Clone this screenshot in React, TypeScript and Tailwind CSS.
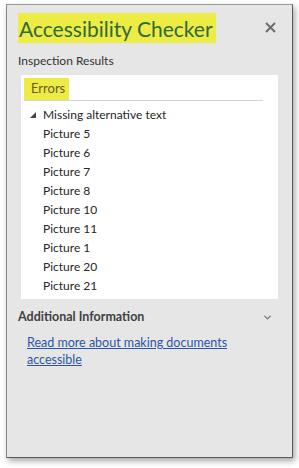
import { ChevronDown } from 'lucide-react';

const pictures = ['Picture 5', 'Picture 6', 'Picture 7', 'Picture 8', 'Picture 10', 'Picture 11', 'Picture 1', 'Picture 20', 'Picture 21'];

export default function App() {
  return (
    <div className="w-[299px] h-[468px] bg-white pt-[4px] pl-[6px]" style={{ fontFamily: 'Lato, "Noto Sans", sans-serif' }}>
      <div className="w-[287px] h-[454px] bg-[#e6e6e6] border border-[#5a5a5a] border-t-[#9a9a9a] border-l-[#8a8a8a] shadow-[2px_3px_6px_rgba(0,0,0,0.35)] flex flex-col pl-[11px] pr-[13px]">
        <div className="flex items-start justify-between mt-[8px]">
          <div className="bg-[#ecec44] h-[30px] w-[198px] flex items-center pl-[1px]">
            <span className="text-[21px] leading-none text-[#2f6a3b] whitespace-nowrap">Accessibility Checker</span>
          </div>
          <svg width="11" height="11" viewBox="0 0 11 11" className="mt-[9px] mr-[3px]">
            <path d="M1 1L10 10M10 1L1 10" stroke="#6b6b6b" strokeWidth="2" />
          </svg>
        </div>
        <div className="mt-[10px] text-[12px] leading-[16px] text-[#333]">Inspection Results</div>
        <div className="mt-[6px] ml-[3px] mr-[1px] bg-white h-[224px] flex flex-col pl-[3px] pr-[15px]">
          <div className="mt-[3px] border-b border-[#d6d6d6] h-[23px]">
            <div className="bg-[#ecec44] w-[45px] h-[22px] flex items-center pl-[7px]">
              <span className="text-[13px] text-[#6b5a1f]">Errors</span>
            </div>
          </div>
          <div className="mt-[4px] flex flex-col text-[12px] text-[#262626]">
            <div className="h-[19px] flex items-center">
              <svg width="6" height="6" viewBox="0 0 6 6" className="ml-[6px] mr-[7px]">
                <path d="M6 0L6 6L0 6Z" fill="#444" />
              </svg>
              <span className="whitespace-nowrap">Missing alternative text</span>
            </div>
            {pictures.map((p) => (
              <div key={p} className="h-[19px] flex items-center pl-[19px]">
                {p}
              </div>
            ))}
          </div>
        </div>
        <div className="mt-[8px] flex items-center justify-between h-[20px]">
          <span className="text-[12.5px] font-bold text-[#404040]">Additional Information</span>
          <ChevronDown className="w-[11px] h-[11px] text-[#777] mr-[6px]" strokeWidth={3} />
        </div>
        <a href="#" className="mt-[7px] ml-[9px] text-[12.5px] leading-[17px] text-[#2a56a8] underline w-[210px]">
          Read more about making documents accessible
        </a>
      </div>
    </div>
  );
}
